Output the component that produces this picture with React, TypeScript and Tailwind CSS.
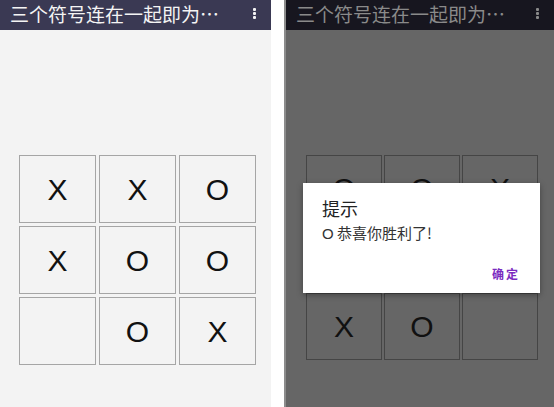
import React from "react";

const cjk = "font-['Noto_Sans_CJK_SC',sans-serif]";
const latin = "font-['Liberation_Sans',Arial,sans-serif]";

function TitleBar({ dim }: { dim?: boolean }) {
  return (
    <div
      className={`h-[30px] flex items-center justify-between pl-[10px] pr-[15px] ${
        dim ? "bg-[#17161f] text-[#8a8a8a]" : "bg-[#3a3953] text-[#f4f4f4]"
      }`}
    >
      <span className={`${cjk} text-[19px] leading-none -mt-[3px]`}>三个符号连在一起即为…</span>
      <div className="flex flex-col gap-[1px] -mt-[4px]">
        <span className={`w-[3px] h-[3px] rounded-[1px] ${dim ? "bg-[#8a8a8a]" : "bg-[#f4f4f4]"}`} />
        <span className={`w-[3px] h-[3px] rounded-[1px] ${dim ? "bg-[#8a8a8a]" : "bg-[#f4f4f4]"}`} />
        <span className={`w-[3px] h-[3px] rounded-[1px] ${dim ? "bg-[#8a8a8a]" : "bg-[#f4f4f4]"}`} />
      </div>
    </div>
  );
}

const left = ["X", "X", "O", "X", "O", "O", "", "O", "X"];
const right = ["O", "O", "X", "X", "O", "X", "X", "O", ""];

export default function App() {
  return (
    <div className="flex w-[554px] h-[407px] bg-white overflow-hidden">
      {/* normal game screen */}
      <div className="w-[271px] h-full bg-[#f3f3f3] flex flex-col">
        <TitleBar />
        <div className="pt-[125px] pl-[19px]">
          <div className="grid grid-cols-[77px_77px_77px] gap-x-[3px] gap-y-[3px]">
            {left.map((c, i) => (
              <div
                key={i}
                className={`h-[68px] border border-[#a5a5a5] flex items-center justify-center ${latin} text-[30px] text-[#111]`}
              >
                {c}
              </div>
            ))}
          </div>
        </div>
      </div>

      <div className="w-[13px]" />

      {/* win dialog screen */}
      <div className="relative w-[270px] h-full bg-[#666666] border-l-2 border-[#8c8c8c] flex flex-col">
        <TitleBar dim />
        <div className="pt-[125px] pl-[20px]">
          <div className="grid grid-cols-[76px_76px_76px] gap-x-[2px] gap-y-[2px]">
            {right.map((c, i) => (
              <div
                key={i}
                className={`h-[67px] border border-[#454545] flex items-center justify-center ${latin} text-[30px] text-[#111]`}
              >
                {c}
              </div>
            ))}
          </div>
        </div>

        <div className="absolute left-[17px] top-[183px] w-[237px] h-[110px] bg-white shadow-[0_2px_6px_rgba(0,0,0,0.35)] pl-[19px] pr-[20px] pt-[13px] flex flex-col">
          <div className={`${cjk} text-[18px] leading-[24px] text-[#222]`}>提示</div>
          <div className={`${cjk} text-[15px] leading-[20px] text-[#333] mt-[3px]`}>
            <span className={`${latin} text-[15px]`}>O</span> 恭喜你胜利了!
          </div>
          <div className="flex justify-end mt-[22px]">
            <span className={`${cjk} text-[12px] font-bold tracking-[2px] text-[#7b2bbf] leading-[16px]`}>确定</span>
          </div>
        </div>
      </div>
    </div>
  );
}
